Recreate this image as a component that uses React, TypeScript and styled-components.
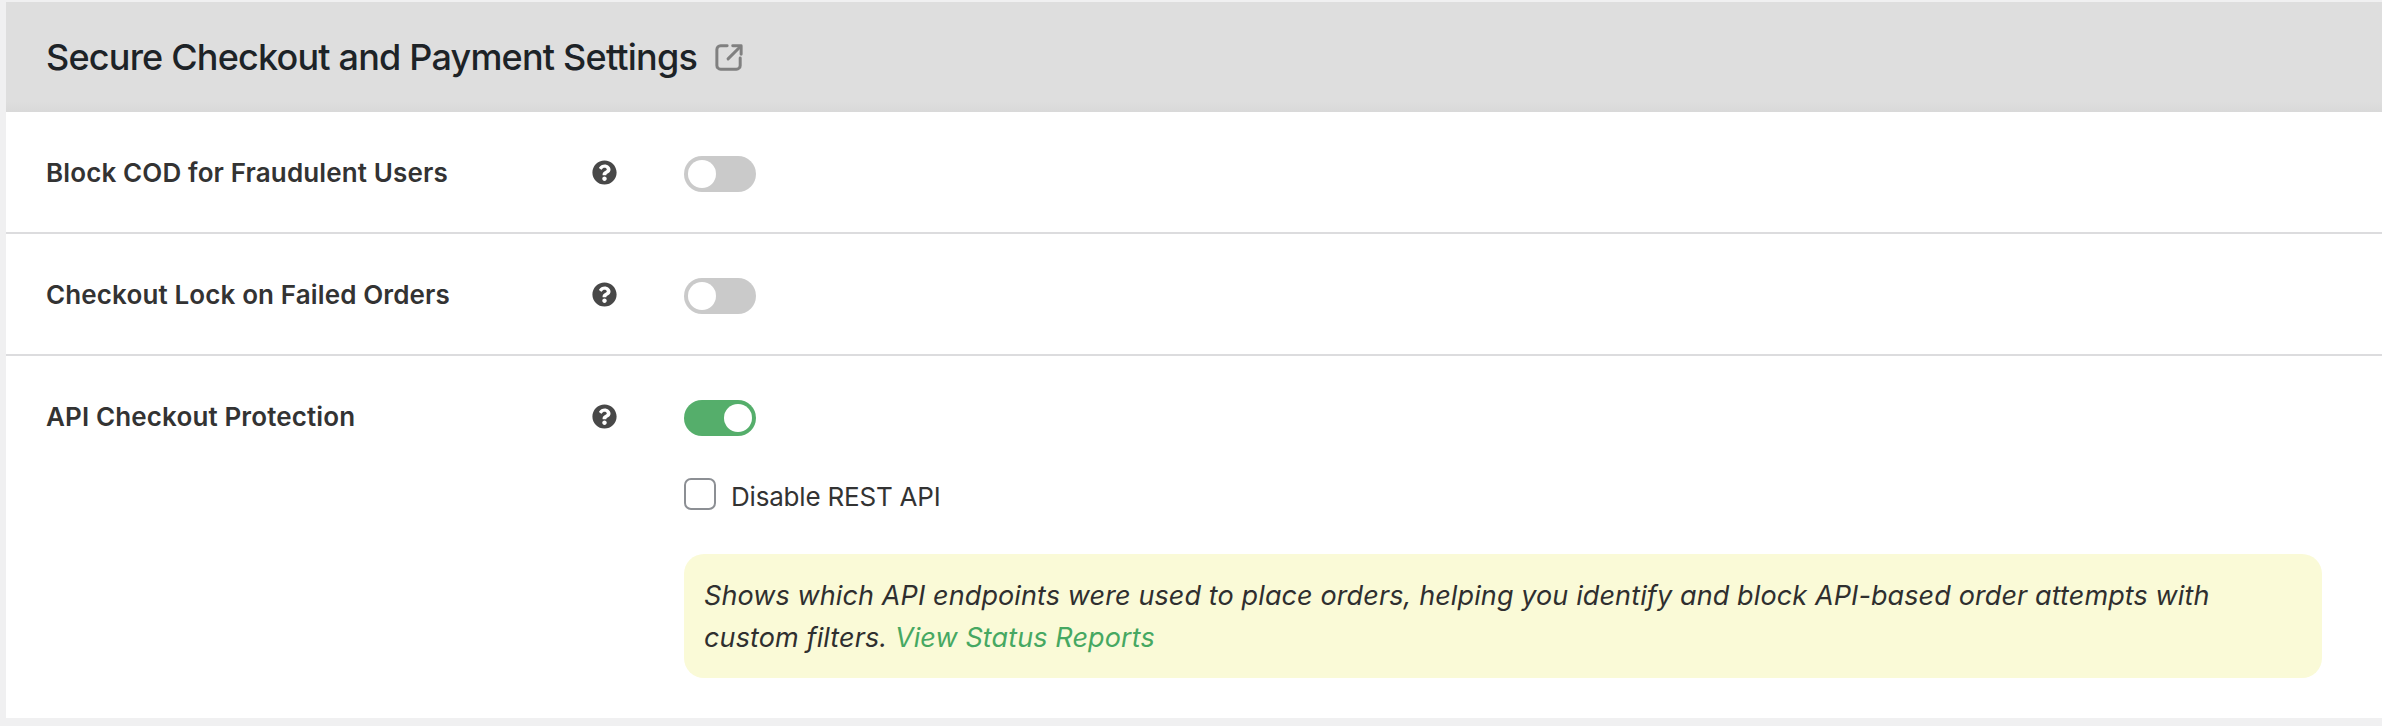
import React from "react";
import styled, { createGlobalStyle } from "styled-components";
import { FaQuestionCircle } from "react-icons/fa";

const Global = createGlobalStyle`
  html, body { margin: 0; padding: 0; background: #f0f0f1; }
  body { font-family: Inter, "Liberation Sans", sans-serif; overflow: hidden; }
`;

const Page = styled.div`
  width: 2382px;
  height: 726px;
  padding: 2px 0 8px 6px;
  box-sizing: border-box;
`;

const Panel = styled.section`
  background: #fff;
  height: 716px;
  display: flex;
  flex-direction: column;
`;

const Header = styled.header`
  height: 110px;
  flex: none;
  box-sizing: border-box;
  padding-left: 40px;
  display: flex;
  align-items: center;
  gap: 18px;
  background: linear-gradient(to bottom, #dedede 0, #dedede 90%, #d9d9d9 100%);
`;

const Title = styled.h2`
  margin: 0;
  font-size: 36px;
  font-weight: 500;
  line-height: 48px;
  color: #1d2327;
  letter-spacing: -0.8px;
`;

const Row = styled.div<{ $last?: boolean }>`
  display: grid;
  grid-template-columns: 546px 92px 1fr;
  padding: 44px 60px 0 40px;
  height: ${(p) => (p.$last ? "364px" : "122px")};
  flex: none;
  box-sizing: border-box;
  border-bottom: ${(p) => (p.$last ? "none" : "2px solid #dcdcde")};
`;

const Label = styled.div`
  font-size: 26px;
  font-weight: 600;
  line-height: 34px;
  letter-spacing: 0.13px;
  color: #333;
`;

const Help = styled.div`
  height: 32px;
  display: flex;
  align-items: center;
  color: #484848;
  font-size: 25px;
`;

const Control = styled.div`
  display: flex;
  flex-direction: column;
  align-items: flex-start;
`;

const Toggle = styled.span<{ $on?: boolean }>`
  width: 72px;
  height: 36px;
  box-sizing: border-box;
  border-radius: 18px;
  padding: 4px;
  display: flex;
  justify-content: ${(p) => (p.$on ? "flex-end" : "flex-start")};
  background: ${(p) => (p.$on ? "#55ae6b" : "#cacaca")};
`;

const Knob = styled.span`
  width: 28px;
  height: 28px;
  border-radius: 50%;
  background: #fff;
`;

const CheckRow = styled.label`
  display: flex;
  align-items: flex-start;
  gap: 15px;
  margin-top: 42px;
  font-size: 26px;
  line-height: 32px;
  letter-spacing: -0.2px;
  color: #333;
`;

const CheckText = styled.span`
  padding-top: 3px;
`;

const Box = styled.span`
  width: 32px;
  height: 32px;
  box-sizing: border-box;
  border: 2px solid #8c8f94;
  border-radius: 7px;
  background: #fff;
`;

const Note = styled.p`
  margin: 41px 0 0;
  width: 100%;
  box-sizing: border-box;
  height: 124px;
  padding: 21px 60px 19px 20px;
  border-radius: 20px;
  background: #fafad7;
  font-size: 27px;
  line-height: 42px;
  letter-spacing: 0.11px;
  font-style: italic;
  color: #2f2f2f;
`;

const ReportLink = styled.a`
  color: #46a862;
  text-decoration: none;
`;

const ExternalIcon = () => (
  <svg width="28" height="28" viewBox="0 0 30 30" fill="none" stroke="#808080" strokeWidth="3.2" strokeLinecap="round" strokeLinejoin="round" aria-hidden="true">
    <path d="M13 3H6a4 4 0 0 0-4 4v17a4 4 0 0 0 4 4h17a4 4 0 0 0 4-4v-8" />
    <path d="M19 3h9v9" />
    <path d="M27 4L14 17" />
  </svg>
);

const settings = [
  { label: "Block COD for Fraudulent Users", on: false },
  { label: "Checkout Lock on Failed Orders", on: false },
];

export default function App() {
  return (
    <Page>
      <Global />
      <Panel>
        <Header>
          <Title>Secure Checkout and Payment Settings</Title>
          <ExternalIcon />
        </Header>
        {settings.map((s) => (
          <Row key={s.label}>
            <Label>{s.label}</Label>
            <Help><FaQuestionCircle /></Help>
            <Control><Toggle $on={s.on}><Knob /></Toggle></Control>
          </Row>
        ))}
        <Row $last>
          <Label>API Checkout Protection</Label>
          <Help><FaQuestionCircle /></Help>
          <Control>
            <Toggle $on><Knob /></Toggle>
            <CheckRow><Box /><CheckText>Disable REST API</CheckText></CheckRow>
            <Note>
              Shows which API endpoints were used to place orders, helping you identify and block API-based order attempts with custom filters.{" "}
              <ReportLink href="#">View Status Reports</ReportLink>
            </Note>
          </Control>
        </Row>
      </Panel>
    </Page>
  );
}
